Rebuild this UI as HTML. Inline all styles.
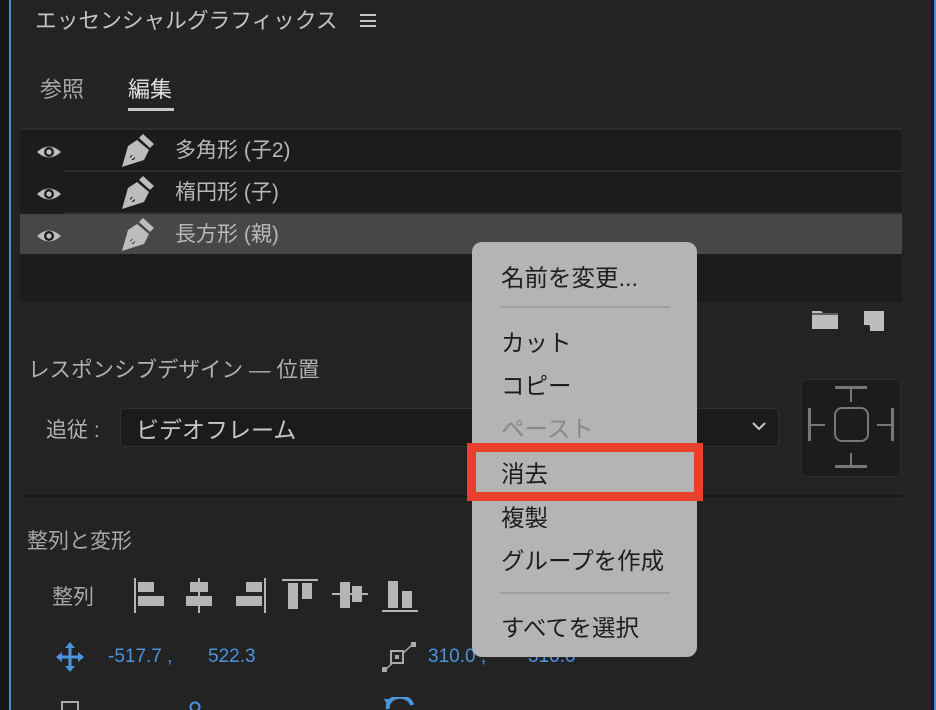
<!DOCTYPE html>
<html><head><meta charset="utf-8"><style>
*{margin:0;padding:0;box-sizing:border-box}
body{width:936px;height:710px;overflow:hidden;background:#232323;position:relative;font-family:"Liberation Sans","Noto Sans CJK JP",sans-serif;color:#bdbdbd}
.a{position:absolute;white-space:nowrap}
.row{position:absolute;left:20px;width:882px;height:40px}
.nm{position:absolute;left:155px;top:4px;font-size:21px;color:#b8b8b8}
.mi{position:absolute;left:29px;font-size:23.5px;color:#1d1d1d}
.blue{color:#4b94e0;font-size:19px}
</style></head><body>
<div class="a" style="left:0;top:0;width:9px;height:710px;background:#181818"></div>
<div class="a" style="left:9px;top:0;width:2px;height:710px;background:#4a8ad6"></div>
<div class="a" style="left:931px;top:0;width:3px;height:710px;background:#181818"></div>
<div class="a" style="left:934px;top:0;width:2px;height:710px;background:#4a8ad6"></div>

<div class="a" style="left:35px;top:4px;font-size:21.7px;color:#c4c4c4">エッセンシャルグラフィックス</div>
<div class="a" style="left:360px;top:14px;width:16px;height:13px;border-top:2px solid #c4c4c4;border-bottom:2px solid #c4c4c4"><div style="margin-top:3.5px;height:2px;background:#c4c4c4"></div></div>
<div class="a" style="left:40px;top:72px;font-size:22px;color:#a8a8a8">参照</div>
<div class="a" style="left:128px;top:72px;font-size:22px;color:#e0e0e0">編集</div>
<div class="a" style="left:128px;top:108px;width:46px;height:3px;background:#c8c8c8"></div>

<div class="a" style="left:20px;top:128px;width:882px;height:174px;background:#1c1c1c"></div>
<div class="a" style="left:20px;top:128px;width:882px;height:2px;background:#2c2c2c"></div>
<svg width="0" height="0" style="position:absolute"><defs>
<g id="eye"><path d="M0 8 Q12 -3 24 8 Q12 19 0 8Z" fill="#bdbdbd"/><circle cx="12" cy="8" r="5" fill="#1c1c1c"/><circle cx="12" cy="8" r="2.6" fill="#bdbdbd"/></g>
<g id="pen"><path d="M22 0 L33 10 L29 14 L18 4Z" fill="#bdbdbd"/><path d="M16 6 L28 16 L23 26 L1 33 L12 21 A2.5 2.5 0 1 0 14 23 L1 33 L7 12Z" fill="#bdbdbd"/></g>
</defs></svg>
<div class="row" style="top:130px"><svg class="a" style="left:17px;top:14px" width="24" height="17"><use href="#eye"/></svg><svg class="a" style="left:101px;top:4px" width="34" height="34"><use href="#pen"/></svg><div class="nm">多角形 (子2)</div></div>
<div class="a" style="left:64px;top:170px;width:838px;height:2px;background:#2c2c2c"></div>
<div class="row" style="top:172px"><svg class="a" style="left:17px;top:14px" width="24" height="17"><use href="#eye"/></svg><svg class="a" style="left:101px;top:4px" width="34" height="34"><use href="#pen"/></svg><div class="nm">楕円形 (子)</div></div>
<div class="a" style="left:64px;top:212px;width:838px;height:2px;background:#2c2c2c"></div>
<div class="row" style="top:214px;background:#474747"><svg class="a" style="left:17px;top:14px" width="24" height="17"><use href="#eye"/></svg><svg class="a" style="left:101px;top:4px" width="34" height="34"><use href="#pen"/></svg><div class="nm">長方形 (親)</div></div>

<svg class="a" style="left:812px;top:309px" width="28" height="22"><path d="M0 2 h9 l2 2 h15 v16 h-26Z" fill="#bdbdbd"/><path d="M0 5 h26" stroke="#232323" stroke-width="1.2"/></svg>
<svg class="a" style="left:863px;top:310px" width="22" height="22"><path d="M1 1h20v20h-14v-6h-6Z" fill="#bdbdbd"/><path d="M1 10 L7 10 L7 16Z" fill="#bdbdbd"/></svg>

<div class="a" style="left:28px;top:353px;font-size:21.5px;color:#b0b0b0">レスポンシブデザイン — 位置</div>
<div class="a" style="left:46px;top:414px;font-size:21px;color:#b0b0b0">追従 :</div>
<div class="a" style="left:120px;top:408px;width:659px;height:39px;background:#1b1b1b;border:1px solid #303030;border-radius:4px"></div>
<div class="a" style="left:136px;top:411px;font-size:23px;color:#c8c8c8">ビデオフレーム</div>
<svg class="a" style="left:752px;top:421px" width="14" height="10"><path d="M1 2 L7 8 L13 2" stroke="#c8c8c8" stroke-width="2" fill="none"/></svg>
<div class="a" style="left:801px;top:379px;width:100px;height:98px;background:#1c1c1c;border:1px solid #2c2c2c;border-radius:5px"></div>
<svg class="a" style="left:801px;top:379px" width="100" height="98" fill="#777"><rect x="34" y="7" width="32" height="3"/><rect x="49" y="10" width="2" height="13"/><rect x="34" y="86" width="32" height="3"/><rect x="49" y="74" width="2" height="12"/><rect x="7" y="29" width="3" height="33"/><rect x="10" y="45" width="14" height="2"/><rect x="90" y="29" width="3" height="33"/><rect x="76" y="45" width="14" height="2"/><rect x="34" y="29" width="33" height="33" rx="7" fill="none" stroke="#777" stroke-width="2"/></svg>
<div class="a" style="left:20px;top:495px;width:882px;height:2px;background:#181818"></div>

<div class="a" style="left:27px;top:525px;font-size:21px;color:#a8a8a8">整列と変形</div>
<div class="a" style="left:52px;top:581px;font-size:21px;color:#a8a8a8">整列</div>
<svg class="a" style="left:130px;top:576px" width="300" height="40" fill="#b5b5b5">
<rect x="4" y="2" width="2" height="35"/><rect x="8" y="6" width="16" height="10"/><rect x="8" y="20" width="26" height="10"/>
<rect x="68" y="2" width="2" height="35"/><rect x="60" y="6" width="18" height="10"/><rect x="56" y="20" width="26" height="10"/>
<rect x="134" y="2" width="2" height="35"/><rect x="116" y="6" width="16" height="10"/><rect x="106" y="20" width="26" height="10"/>
<rect x="152" y="3" width="36" height="2"/><rect x="158" y="7" width="10" height="26"/><rect x="172" y="7" width="10" height="16"/>
<rect x="202" y="17" width="36" height="2"/><rect x="210" y="6" width="10" height="26"/><rect x="222" y="10" width="10" height="16"/>
<rect x="252" y="34" width="36" height="2"/><rect x="258" y="5" width="10" height="27"/><rect x="272" y="15" width="10" height="17"/>
</svg>
<svg class="a" style="left:56px;top:642px" width="28" height="30" fill="#4b94e0"><path d="M14 0 L19 6 H15.5 V13.5 H22 V10 L28 15 L22 20 V16.5 H15.5 V24 H19 L14 30 L9 24 H12.5 V16.5 H6 V20 L0 15 L6 10 V13.5 H12.5 V6 H9Z"/></svg>
<div class="a blue" style="left:108px;top:646px">-517.7 ,</div>
<div class="a blue" style="left:208px;top:646px">522.3</div>
<svg class="a" style="left:382px;top:641px" width="34" height="32"><path d="M3 29 L31 3" stroke="#aaa" stroke-width="1.5"/><rect x="9" y="10" width="12" height="12" fill="#232323" stroke="#aaa" stroke-width="2"/><rect x="13" y="14" width="4" height="4" fill="#aaa"/><rect x="0" y="26" width="5" height="5" fill="#aaa"/><rect x="29" y="1" width="5" height="5" fill="#aaa"/></svg>
<div class="a blue" style="left:428px;top:646px">310.0 ,</div>
<div class="a blue" style="left:528px;top:646px">310.0</div>
<svg class="a" style="left:60px;top:700px" width="24" height="10"><rect x="2" y="2" width="16" height="12" fill="none" stroke="#aaa" stroke-width="2"/></svg>
<svg class="a" style="left:188px;top:700px" width="14" height="10"><circle cx="7" cy="7" r="4.5" fill="none" stroke="#4b94e0" stroke-width="2"/></svg>
<svg class="a" style="left:382px;top:697px" width="36" height="13"><path d="M6 12 A12 10 0 0 1 30 8" fill="none" stroke="#4b94e0" stroke-width="4"/><path d="M2 2 L10 2 L6 9Z" fill="#4b94e0"/></svg>

<div class="a" style="left:472px;top:242px;width:225px;height:415px;background:#b4b4b4;border-radius:10px">
<div class="mi" style="top:17px">名前を変更...</div>
<div class="a" style="left:28px;top:64px;width:170px;height:2px;background:#a0a0a0"></div>
<div class="mi" style="top:82px">カット</div>
<div class="mi" style="top:125px">コピー</div>
<div class="mi" style="top:168px;color:#888">ペースト</div>
<div class="mi" style="top:213px">消去</div>
<div class="mi" style="top:257px">複製</div>
<div class="mi" style="top:300px">グループを作成</div>
<div class="a" style="left:28px;top:350px;width:170px;height:2px;background:#a0a0a0"></div>
<div class="mi" style="top:367px">すべてを選択</div>
</div>
<div class="a" style="left:467px;top:443px;width:236px;height:58px;border:9px solid #e8402a"></div>
</body></html>
